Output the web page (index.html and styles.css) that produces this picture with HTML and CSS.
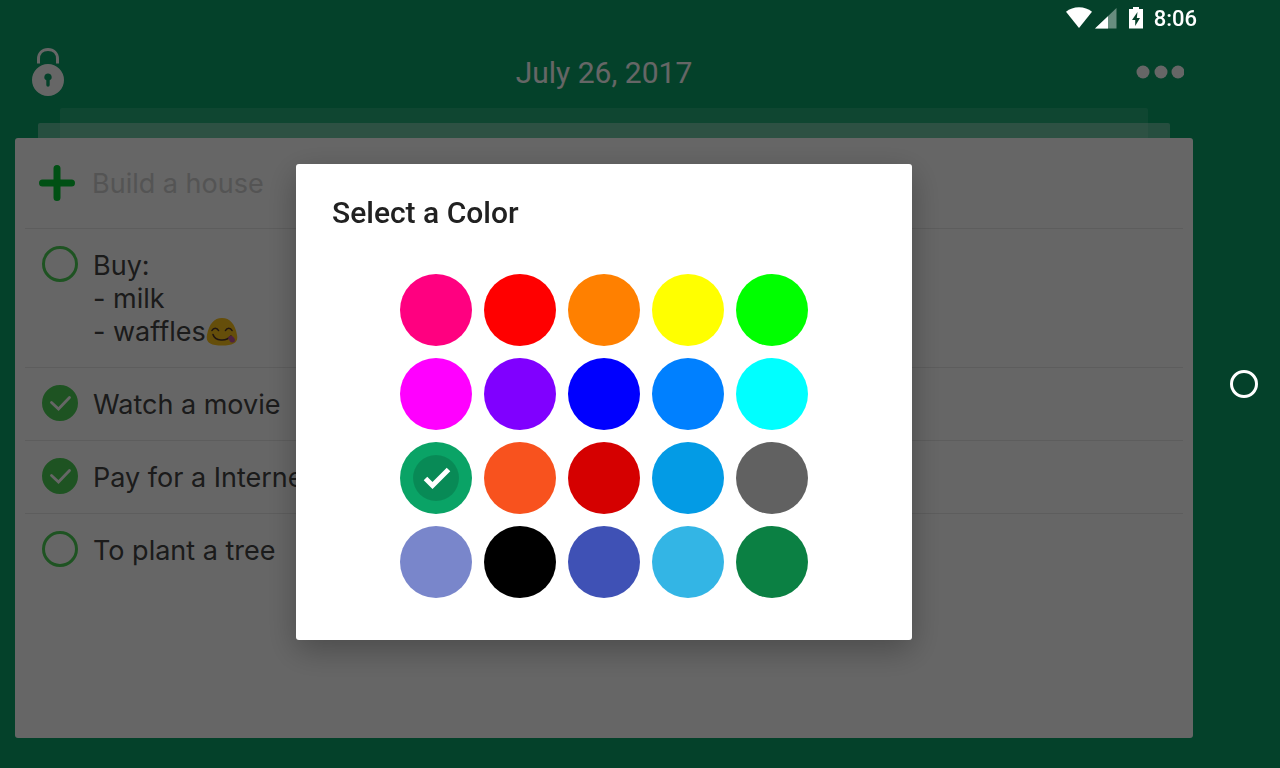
FILE: index.html
```html
<!DOCTYPE html>
<html lang="en">
<head>
  <meta charset="UTF-8">
  <meta name="viewport" content="width=device-width, initial-scale=1.0">
  <title>Tasks - July 26, 2017</title>
  <link rel="stylesheet" href="styles.css">
</head>
<body>
  <div class="screen">
    <div class="app">
      <!-- Status bar -->
      <div class="status-bar">
        <svg class="wifi" width="26" height="22" viewBox="0 0 26 22"><path d="M13 21 0 4.700C3.600 1.800 8 .2 13 .2s9.400 1.600 13 4.500z" fill="#fff"/></svg>
        <svg class="signal" width="22" height="21" viewBox="0 0 22 21"><path d="M21.500 0v20.500H0z" fill="#fff" fill-opacity=".4"/><path d="M13 8.300V20.500H0z" fill="#fff"/></svg>
        <svg class="battery" width="14" height="22" viewBox="0 0 14 22"><path fill="#fff" fill-rule="evenodd" d="M4 0h6v2h4v19.500H0V2h4zM8.500 5 3 13h3.200v6L11 11H7.800z"/></svg>
        <span class="time">8:06</span>
      </div>

      <!-- Header -->
      <header class="header">
        <button class="icon-button" type="button" aria-label="Lock">
          <svg width="48" height="48" viewBox="0 0 48 48">
            <path d="M14.500 15.500V11C14.500 5 18.500 1.500 24 1.500S33.500 5 33.500 11v4.500" fill="none" stroke="#fff" stroke-width="3"/>
            <path fill="#fff" fill-rule="evenodd" d="M24 16a16 16 0 1 1 0 32 16 16 0 0 1 0-32zm0 9.500a3.600 3.600 0 0 0-1.700 6.800v4.700a1.700 1.700 0 0 0 3.400 0v-4.700A3.600 3.600 0 0 0 24 25.500z"/>
          </svg>
        </button>
        <h1 class="date">July 26, 2017</h1>
        <button class="icon-button" type="button" aria-label="More">
          <svg width="48" height="48" viewBox="0 0 48 48" fill="#fff"><circle cx="7" cy="24" r="6.500"/><circle cx="25" cy="24" r="6.500"/><circle cx="42" cy="24" r="6.500"/></svg>
        </button>
      </header>

      <!-- Pages behind the list -->
      <div class="sheet sheet-back"></div>
      <div class="sheet sheet-middle"></div>

      <!-- Task list -->
      <main class="card">
        <div class="new-task">
          <svg width="36" height="36" viewBox="0 0 36 36"><path d="M18 3.500v29M3.500 18h29" stroke="#00c832" stroke-width="7" stroke-linecap="round"/></svg>
          <input class="new-task-input" type="text" placeholder="Build a house" aria-label="New task">
        </div>
        <ul class="tasks">
          <li>
            <label class="task">
              <span class="check">
                <input type="checkbox">
              </span>
              <span class="task-text">Buy:<br>- milk<br>- waffles<svg class="emoji" width="32" height="28" viewBox="0 0 32 28" role="img" aria-label="yum">
                <path d="M16 0C8 0 3 6 1 17c-1.500 7 3 10.500 15 10.500S32.500 24 31 17C29 6 24 0 16 0z" fill="#fcc21b"/>
                <path d="M6 12.500c1.500-3 5-3 6.500 0M19.500 12.500c1.500-3 5-3 6.500 0M7 16.500c2 6.500 13 7.500 18 1.500" fill="none" stroke="#50362a" stroke-width="1.600" stroke-linecap="round"/>
                <path d="M22 20c.8-2 3-2.800 4.500-1.700 2 1.700 3.300 3.700 2 5.500-1.300 1.300-3.300.8-4.500-.4z" fill="#c0569f"/>
              </svg></span>
            </label>
          </li>
          <li>
            <label class="task">
              <span class="check">
                <input type="checkbox" checked>
                <svg width="36" height="36" viewBox="0 0 36 36"><path d="m9.500 17.500 7 6.500L27.500 12.500" fill="none" stroke="#fff" stroke-width="2.800" stroke-linecap="round"/></svg>
              </span>
              <span class="task-text">Watch a movie</span>
            </label>
          </li>
          <li>
            <label class="task">
              <span class="check">
                <input type="checkbox" checked>
                <svg width="36" height="36" viewBox="0 0 36 36"><path d="m9.500 17.500 7 6.500L27.500 12.500" fill="none" stroke="#fff" stroke-width="2.800" stroke-linecap="round"/></svg>
              </span>
              <span class="task-text">Pay for a Internet</span>
            </label>
          </li>
          <li>
            <label class="task">
              <span class="check">
                <input type="checkbox">
              </span>
              <span class="task-text">To plant a tree</span>
            </label>
          </li>
        </ul>
      </main>
    </div>

    <!-- Navigation bar -->
    <nav class="nav-bar">
      <button class="home" type="button" aria-label="Home"></button>
    </nav>
  </div>

  <!-- Color picker -->
  <div class="overlay">
    <div class="dialog" role="dialog" aria-labelledby="dialog-title">
      <h2 class="dialog-title" id="dialog-title">Select a Color</h2>
      <div class="colors" role="radiogroup" aria-labelledby="dialog-title">
        <input type="radio" name="color" class="pink" aria-label="Pink">
        <input type="radio" name="color" class="red" aria-label="Red">
        <input type="radio" name="color" class="orange" aria-label="Orange">
        <input type="radio" name="color" class="yellow" aria-label="Yellow">
        <input type="radio" name="color" class="lime" aria-label="Lime">
        <input type="radio" name="color" class="magenta" aria-label="Magenta">
        <input type="radio" name="color" class="violet" aria-label="Violet">
        <input type="radio" name="color" class="blue" aria-label="Blue">
        <input type="radio" name="color" class="azure" aria-label="Azure">
        <input type="radio" name="color" class="cyan" aria-label="Cyan">
        <label class="swatch">
          <input type="radio" name="color" class="green" aria-label="Green" checked>
          <svg width="46" height="46" viewBox="0 0 46 46"><circle cx="23" cy="23" r="23" fill="#000" fill-opacity=".15"/><path d="m12.500 23.500 7 7L35.500 14.500" fill="none" stroke="#fff" stroke-width="5"/></svg>
        </label>
        <input type="radio" name="color" class="coral" aria-label="Coral">
        <input type="radio" name="color" class="crimson" aria-label="Crimson">
        <input type="radio" name="color" class="cerulean" aria-label="Cerulean">
        <input type="radio" name="color" class="gray" aria-label="Gray">
        <input type="radio" name="color" class="lavender" aria-label="Lavender">
        <input type="radio" name="color" class="black" aria-label="Black">
        <input type="radio" name="color" class="indigo" aria-label="Indigo">
        <input type="radio" name="color" class="sky" aria-label="Sky">
        <input type="radio" name="color" class="forest" aria-label="Forest">
      </div>
    </div>
  </div>
</body>
</html>
```
FILE: styles.css
```css
* {
  box-sizing: border-box;
}

body {
  margin: 0;
  background-color: #0aa369;
  font-family: Roboto, "Liberation Sans", sans-serif;
}

button {
  padding: 0;
  border: none;
  background: none;
  cursor: pointer;
}

svg {
  display: block;
}

.screen {
  display: flex;
  min-height: 100vh;
}

.app {
  flex: 1;
  display: flex;
  flex-direction: column;
}

/* Status bar */
.status-bar {
  position: relative;
  z-index: 2;
  display: flex;
  justify-content: flex-end;
  align-items: center;
  height: 36px;
  padding-right: 11px;
  color: #fff;
}

.signal {
  margin: 0 12px 0 3px;
}

.time {
  margin-left: 11px;
  font-size: 22px;
  font-weight: 500;
}

/* Header */
.header {
  display: flex;
  justify-content: space-between;
  align-items: center;
  height: 72px;
  padding: 0 24px;
}

.date {
  margin: 0;
  color: #fff;
  font-size: 30px;
  font-weight: 400;
}

/* Stacked pages */
.sheet {
  background-color: #fff;
  border-radius: 2px 2px 0 0;
}

.sheet-back {
  height: 30px;
  margin: 0 60px -15px;
  opacity: 0.12;
}

.sheet-middle {
  height: 15px;
  margin: 0 38px;
  opacity: 0.35;
}

.card {
  flex: 1;
  margin: 0 15px 30px;
  padding: 0 10px;
  background-color: #fff;
  border-radius: 3px;
  font-family: Inter, "Liberation Sans", sans-serif;
}

.new-task {
  display: flex;
  align-items: center;
  gap: 17px;
  height: 90px;
  padding-left: 14px;
}

.new-task-input {
  flex: 1;
  padding: 0;
  border: none;
  outline: none;
  background: none;
  font-family: inherit;
  font-size: 27px;
}

.new-task-input::placeholder {
  color: #d2d2d2;
}

.tasks {
  margin: 0;
  padding: 0;
  list-style: none;
}

.task {
  display: flex;
  gap: 15px;
  padding: 17px 0 19px 17px;
  border-top: 1px solid #e8e8e8;
}

.check {
  display: grid;
  height: 36px;
}

.check > * {
  grid-area: 1 / 1;
}

.check input {
  appearance: none;
  width: 36px;
  height: 36px;
  margin: 0;
  border: 3px solid #4cd055;
  border-radius: 50%;
}

.check input:checked {
  background-color: #4cd055;
}

.task-text {
  padding-top: 3px;
  color: #444;
  font-size: 27px;
  line-height: 33px;
}

.emoji {
  display: inline-block;
  vertical-align: -5px;
}

/* Navigation bar */
.nav-bar {
  position: relative;
  z-index: 2;
  display: flex;
  justify-content: center;
  align-items: center;
  width: 72px;
}

.home {
  width: 28px;
  height: 28px;
  border: 3px solid #fff;
  border-radius: 50%;
}

/* Color picker */
.overlay {
  position: fixed;
  inset: 0;
  z-index: 1;
  display: flex;
  justify-content: center;
  align-items: center;
  padding: 36px 72px 0 0;
  background-color: rgba(0, 0, 0, 0.6);
}

.dialog {
  width: 616px;
  padding: 32px 36px 42px;
  background-color: #fff;
  border-radius: 3px;
  box-shadow: 0 10px 32px rgba(0, 0, 0, 0.28);
}

.dialog-title {
  margin: 0 0 44px;
  color: #212121;
  font-size: 30px;
  font-weight: 500;
  line-height: 34px;
}

.colors {
  display: grid;
  grid-template-columns: repeat(5, 72px);
  justify-content: center;
  gap: 12px;
}

.colors input {
  appearance: none;
  width: 72px;
  height: 72px;
  margin: 0;
  border-radius: 50%;
  cursor: pointer;
}

.swatch {
  display: grid;
  place-items: center;
}

.swatch > * {
  grid-area: 1 / 1;
}

.pink { background-color: #ff0080; }
.red { background-color: #ff0000; }
.orange { background-color: #ff8000; }
.yellow { background-color: #ffff00; }
.lime { background-color: #00ff00; }
.magenta { background-color: #ff00ff; }
.violet { background-color: #8000ff; }
.blue { background-color: #0000ff; }
.azure { background-color: #0080ff; }
.cyan { background-color: #00ffff; }
.green { background-color: #0aa366; }
.coral { background-color: #f8521e; }
.crimson { background-color: #d50000; }
.cerulean { background-color: #039be5; }
.gray { background-color: #616161; }
.lavender { background-color: #7986cb; }
.black { background-color: #000000; }
.indigo { background-color: #3f51b5; }
.sky { background-color: #33b5e5; }
.forest { background-color: #0b8043; }
```
